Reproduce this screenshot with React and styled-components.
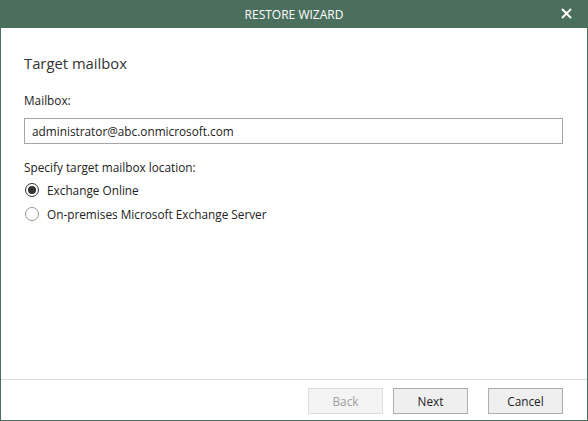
import React from 'react';
import styled, { createGlobalStyle } from 'styled-components';

const GlobalStyle = createGlobalStyle`
  html, body, #root {
    margin: 0;
    padding: 0;
    width: 100%;
    height: 100%;
  }
  body {
    font-family: "Segoe UI", "Open Sans", "Noto Sans", sans-serif;
    background: #ffffff;
    overflow: hidden;
  }
`;

const Window = styled.div`
  width: 588px;
  height: 421px;
  display: flex;
  flex-direction: column;
  box-sizing: border-box;
  background: #4b6f5d;
  padding: 0 1px 1px 1px;
`;

const TitleBar = styled.div`
  height: 28px;
  flex: 0 0 28px;
  display: flex;
  align-items: center;
  justify-content: center;
  position: relative;
  color: #ffffff;
  font-size: 12px;
`;

const CloseButton = styled.div`
  position: absolute;
  right: 15px;
  top: 8px;
  width: 11px;
  height: 11px;
  display: flex;
`;

const Body = styled.div`
  flex: 1;
  background: #ffffff;
  display: flex;
  flex-direction: column;
`;

const Content = styled.div`
  flex: 1;
  padding: 25px 24px 0 23px;
  display: flex;
  flex-direction: column;
`;

const Heading = styled.div`
  font-size: 14.8px;
  color: #333333;
  margin-bottom: 19px;
`;

const Label = styled.div`
  font-size: 11.8px;
  color: #222222;
  margin-bottom: ${p => p.spacing || 6}px;
`;

const TextInput = styled.div`
  height: 26px;
  box-sizing: border-box;
  border: 1px solid #a5a5a5;
  display: flex;
  align-items: center;
  padding-left: 7px;
  font-size: 11.8px;
  color: #222222;
  margin-bottom: 15px;
`;

const RadioGroup = styled.div`
  display: flex;
  flex-direction: column;
  gap: 8px;
  margin-top: 2px;
`;

const RadioRow = styled.div`
  display: flex;
  align-items: center;
  gap: 8px;
  font-size: 11.8px;
  color: #222222;
  height: 16px;
`;

const RadioCircle = styled.div`
  width: 14px;
  height: 14px;
  box-sizing: border-box;
  border-radius: 50%;
  border: 1px solid ${p => (p.checked ? '#333333' : '#999999')};
  display: flex;
  align-items: center;
  justify-content: center;
  margin-left: 1px;

  &::after {
    content: '';
    width: 8px;
    height: 8px;
    border-radius: 50%;
    background: #333333;
    display: ${p => (p.checked ? 'block' : 'none')};
  }
`;

const Footer = styled.div`
  flex: 0 0 41px;
  border-top: 1px solid #dcdcdc;
  display: flex;
  justify-content: flex-end;
  align-items: flex-start;
  padding: 8px 24px 0 0;
  box-sizing: border-box;
`;

const Button = styled.div`
  width: 75px;
  height: 26px;
  box-sizing: border-box;
  border: 1px solid ${p => (p.disabled ? '#dcdcdc' : '#adadad')};
  background: ${p => (p.disabled ? '#f4f4f4' : '#efefef')};
  color: ${p => (p.disabled ? '#a0a0a0' : '#222222')};
  font-size: 11.8px;
  display: flex;
  align-items: center;
  justify-content: center;
  margin-left: ${p => p.gap || 0}px;
`;

const App = () => {
  return (
    <>
      <GlobalStyle />
      <Window>
        <TitleBar>
          RESTORE WIZARD
          <CloseButton>
            <svg width="11" height="11" viewBox="0 0 11 11">
              <path d="M1 1L10 10M10 1L1 10" stroke="#ffffff" strokeWidth="2" />
            </svg>
          </CloseButton>
        </TitleBar>
        <Body>
          <Content>
            <Heading>Target mailbox</Heading>
            <Label spacing={10}>Mailbox:</Label>
            <TextInput>administrator@abc.onmicrosoft.com</TextInput>
            <Label spacing={5}>Specify target mailbox location:</Label>
            <RadioGroup>
              <RadioRow>
                <RadioCircle checked />
                Exchange Online
              </RadioRow>
              <RadioRow>
                <RadioCircle />
                On-premises Microsoft Exchange Server
              </RadioRow>
            </RadioGroup>
          </Content>
          <Footer>
            <Button disabled>Back</Button>
            <Button gap={10}>Next</Button>
            <Button gap={20}>Cancel</Button>
          </Footer>
        </Body>
      </Window>
    </>
  );
};

export default App;
